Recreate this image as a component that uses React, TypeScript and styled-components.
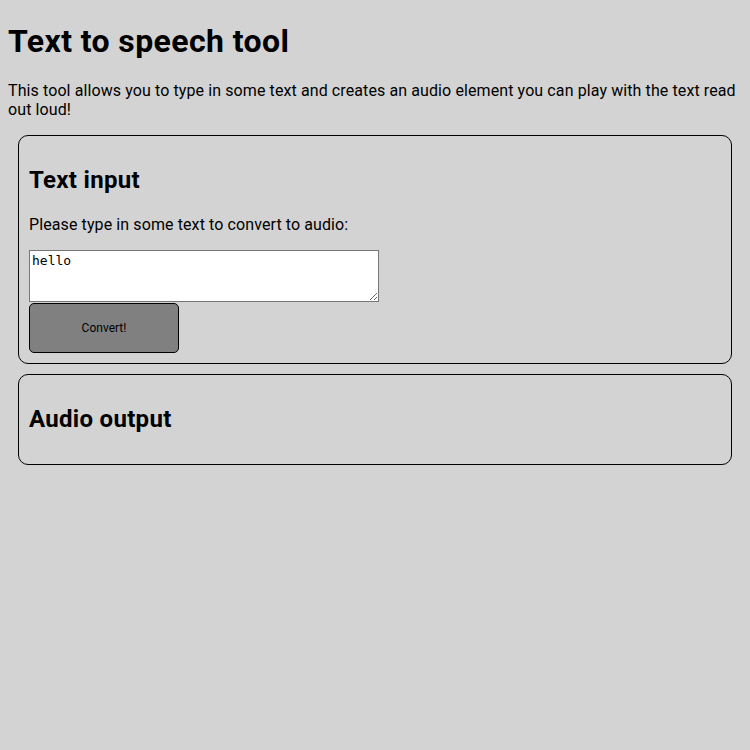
import React, { useState } from "react";
import styled, { createGlobalStyle } from "styled-components";

const GlobalStyle = createGlobalStyle`
  body {
    margin: 8px;
    background: #d3d3d3;
    font-family: Roboto, "Liberation Sans", sans-serif;
    color: #000;
  }
`;

const App: React.FC = () => {
  const [text, setText] = useState("hello");
  return (
    <>
      <GlobalStyle />
      <Title>Text to speech tool</Title>
      <Intro>
        This tool allows you to type in some text and creates an audio element
        you can play with the text read out loud!
      </Intro>
      <Panel>
        <PanelTitle>Text input</PanelTitle>
        <Intro>Please type in some text to convert to audio:</Intro>
        <TextBox value={text} onChange={(e) => setText(e.target.value)} />
        <ConvertButton>Convert!</ConvertButton>
      </Panel>
      <Panel>
        <PanelTitle>Audio output</PanelTitle>
      </Panel>
    </>
  );
};
export default App;

const Title = styled.h1`
  font-size: 32px;
  font-weight: 700;
  letter-spacing: 0.4px;
  margin: 14px 0 21.44px;
`;

const Intro = styled.p`
  font-size: 16px;
  letter-spacing: 0.1px;
  margin: 16px 0;
`;

const Panel = styled.section`
  margin: 10px;
  padding: 10px;
  border: 1px solid #000;
  border-radius: 10px;
`;

const PanelTitle = styled.h2`
  font-size: 24px;
  font-weight: 700;
  letter-spacing: 0.3px;
  line-height: 29px;
  margin: 20px 0;
`;

const TextBox = styled.textarea`
  display: block;
  box-sizing: border-box;
  width: 350px;
  height: 52px;
  margin: 3px 0 1px;
  padding: 2px;
  border: 1px solid #767676;
  background: #fff;
  font-family: "DejaVu Sans Mono", monospace;
  font-size: 13px;
`;

const ConvertButton = styled.button`
  display: block;
  box-sizing: border-box;
  width: 150px;
  height: 50px;
  background: #808080;
  border: 1px solid #000;
  border-radius: 5px;
  font-family: Roboto, "Liberation Sans", sans-serif;
  font-size: 12px;
  color: #000;
`;
